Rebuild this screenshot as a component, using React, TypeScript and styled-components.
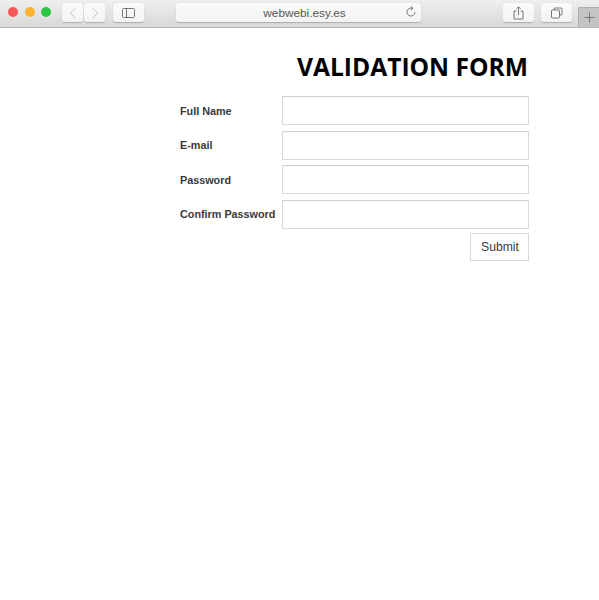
import React from "react";
import styled, { createGlobalStyle } from "styled-components";

const Global = createGlobalStyle`
  html, body { margin: 0; padding: 0; background: #fff; }
  body { font-family: "Liberation Sans", Arial, sans-serif; }
`;

const Page = styled.div`
  width: 599px;
  height: 600px;
  overflow: hidden;
  background: #fff;
`;

const Toolbar = styled.header`
  height: 27px;
  box-sizing: content-box;
  border-bottom: 1px solid #b4b4b4;
  background: linear-gradient(#efefef, #d8d8d8);
  display: flex;
  align-items: flex-start;
  padding-left: 8px;
`;

const Lights = styled.div`
  display: flex;
  gap: 6.5px;
  margin-top: 7px;
  width: 53px;
  flex: none;
`;

const Light = styled.span<{ $c: string }>`
  width: 10px;
  height: 10px;
  border-radius: 50%;
  background: ${(p) => p.$c};
`;

const ToolButton = styled.div<{ $w: number; $ml?: number }>`
  width: ${(p) => p.$w}px;
  height: 19px;
  margin-top: 3px;
  margin-left: ${(p) => p.$ml ?? 0}px;
  box-sizing: border-box;
  background: linear-gradient(#fbfbfb, #f3f3f3);
  border-radius: 3px;
  box-shadow: 0 0.5px 1px rgba(0, 0, 0, 0.22);
  display: flex;
  align-items: center;
  justify-content: center;
  flex: none;
`;

const Address = styled(ToolButton)`
  position: relative;
  padding-left: 12px;
  font-size: 11.8px;
  color: #555;
`;

const Reload = styled.svg`
  position: absolute;
  right: 4px;
  top: 3px;
`;

const NewTab = styled.div`
  width: 21px;
  height: 20px;
  margin-top: 7px;
  margin-left: 6px;
  background: #c4c4c4;
  border-left: 1px solid #b0b0b0;
  border-top: 1px solid #b0b0b0;
  box-sizing: border-box;
  display: flex;
  align-items: center;
  justify-content: center;
  flex: none;
`;

const Form = styled.form`
  width: 349px;
  margin-left: 180px;
  display: flex;
  flex-direction: column;
`;

const Title = styled.h1`
  margin: 23px 1px 13px 0;
  font-family: "Open Sans", sans-serif;
  font-weight: 700;
  font-size: 24.6px;
  line-height: 32px;
  color: #000;
  text-align: right;
  white-space: nowrap;
`;

const Rows = styled.div`
  display: flex;
  flex-direction: column;
  gap: 5.5px;
`;

const Row = styled.div`
  display: flex;
  align-items: center;
`;

const Label = styled.label`
  width: 102px;
  flex: none;
  font-size: 10.8px;
  font-weight: 700;
  color: #3a3a3a;
  white-space: nowrap;
`;

const Input = styled.input`
  width: 247px;
  height: 29px;
  box-sizing: border-box;
  background: #fff;
  border: 1px solid #dadada;
  border-top-color: #d2d2d2;
  box-shadow: inset 0 1px 1px rgba(0, 0, 0, 0.04);
  padding: 0 6px;
  outline: none;
`;

const Actions = styled.div`
  display: flex;
  justify-content: flex-end;
  margin-top: 4.5px;
`;

const Submit = styled.button`
  width: 59px;
  height: 28px;
  box-sizing: border-box;
  background: #fff;
  border: 1px solid #d8d8d8;
  font-family: "Liberation Sans", Arial, sans-serif;
  font-size: 12.2px;
  color: #3a3a3a;
  padding: 0 0 0 1px;
`;

const fields = ["Full Name", "E-mail", "Password", "Confirm Password"];

export default function App() {
  return (
    <Page>
      <Global />
      <Toolbar>
        <Lights>
          <Light $c="#f9575a" />
          <Light $c="#fdb32c" />
          <Light $c="#2cc640" />
        </Lights>
        <ToolButton $w={21} $ml={1}>
          <svg width="8" height="12" viewBox="0 0 8 12" fill="none" stroke="#c4c4c4" strokeWidth="1">
            <path d="M6.5 1 L1.5 6 L6.5 11" />
          </svg>
        </ToolButton>
        <ToolButton $w={21} $ml={1}>
          <svg width="8" height="12" viewBox="0 0 8 12" fill="none" stroke="#c4c4c4" strokeWidth="1">
            <path d="M1.5 1 L6.5 6 L1.5 11" />
          </svg>
        </ToolButton>
        <ToolButton $w={31} $ml={8}>
          <svg width="13" height="10" viewBox="0 0 13 10" fill="none" stroke="#777" strokeWidth="1">
            <rect x="0.5" y="0.5" width="12" height="9" rx="1" />
            <path d="M4.5 0.5 V9.5" />
          </svg>
        </ToolButton>
        <Address $w={245} $ml={32}>
          webwebi.esy.es
          <Reload width="12" height="12" viewBox="0 0 12 12" fill="none" stroke="#777" strokeWidth="1">
            <path d="M7.5 2.3 A4 4 0 1 0 10 6" />
            <path d="M5.8 0.5 L8 2.3 L5.8 4" />
          </Reload>
        </Address>
        <ToolButton $w={31} $ml={82}>
          <svg width="11" height="14" viewBox="0 0 11 14" fill="none" stroke="#777" strokeWidth="1">
            <path d="M3.5 5 H1 V13 H10 V5 H7.5" />
            <path d="M5.5 9 V1 M3.5 2.8 L5.5 0.8 L7.5 2.8" />
          </svg>
        </ToolButton>
        <ToolButton $w={31} $ml={7}>
          <svg width="12" height="12" viewBox="0 0 12 12" fill="none" stroke="#777" strokeWidth="1">
            <rect x="0.5" y="3" width="8" height="8" rx="1" />
            <path d="M3 3 V2 Q3 1 4 1 H10 Q11 1 11 2 V7 Q11 8 10 8 H8.5" />
          </svg>
        </ToolButton>
        <NewTab>
          <svg width="11" height="11" viewBox="0 0 11 11" stroke="#777" strokeWidth="1">
            <path d="M5.5 0.5 V10.5 M0.5 5.5 H10.5" />
          </svg>
        </NewTab>
      </Toolbar>
      <Form>
        <Title>VALIDATION FORM</Title>
        <Rows>
          {fields.map((f) => (
            <Row key={f}>
              <Label>{f}</Label>
              <Input />
            </Row>
          ))}
        </Rows>
        <Actions>
          <Submit type="button">Submit</Submit>
        </Actions>
      </Form>
    </Page>
  );
}
